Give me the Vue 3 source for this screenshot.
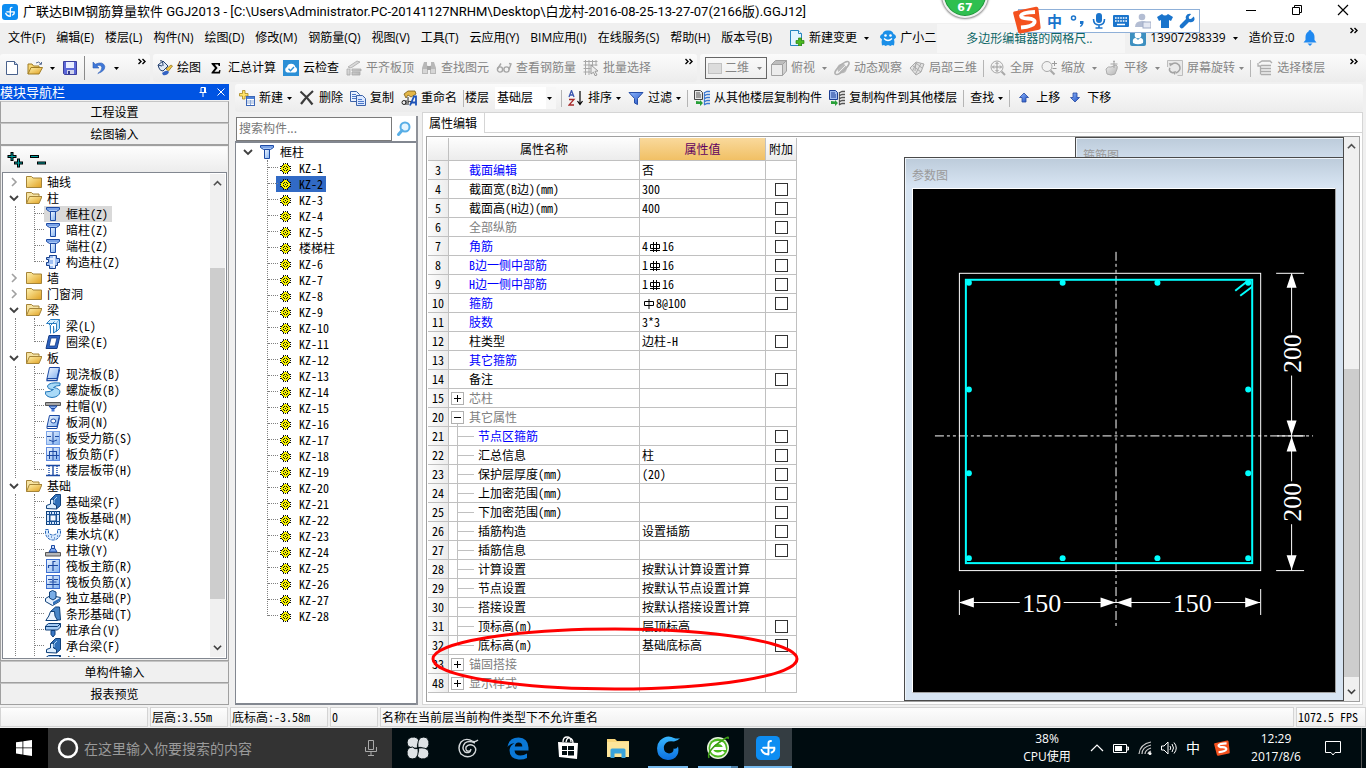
<script setup>
import { ref } from 'vue'

const title = '广联达BIM钢筋算量软件 GGJ2013 - [C:\\Users\\Administrator.PC-20141127NRHM\\Desktop\\白龙村-2016-08-25-13-27-07(2166版).GGJ12]'

const menus = ['文件(F)', '编辑(E)', '楼层(L)', '构件(N)', '绘图(D)', '修改(M)', '钢筋量(Q)', '视图(V)', '工具(T)', '云应用(Y)', 'BIM应用(I)', '在线服务(S)', '帮助(H)', '版本号(B)']

const drawTools = [
  { icon: 'paint', label: '绘图' },
  { icon: 'sigma', label: '汇总计算' },
  { icon: 'cloud', label: '云检查' },
  { icon: 'align', label: '平齐板顶', off: true },
  { icon: 'binoc', label: '查找图元', off: true },
  { icon: 'glasses', label: '查看钢筋量', off: true },
  { icon: 'batch', label: '批量选择', off: true },
]
const viewTools = [
  { icon: 'cube', label: '俯视', arrow: true },
  { icon: 'orbit', label: '动态观察' },
  { icon: 'local3d', label: '局部三维' },
  { sep: true },
  { icon: 'full', label: '全屏' },
  { icon: 'zoom', label: '缩放', arrow: true },
  { icon: 'pan', label: '平移', arrow: true },
  { icon: 'rotate', label: '屏幕旋转', arrow: true },
  { sep: true },
  { icon: 'floors', label: '选择楼层' },
]

const moduleTree = [
  { label: '轴线' },
  { label: '柱', kids: [['pillar', '框柱(Z)'], ['pillar', '暗柱(Z)'], ['pillar', '端柱(Z)'], ['struct', '构造柱(Z)']] },
  { label: '墙' },
  { label: '门窗洞' },
  { label: '梁', kids: [['beam', '梁(L)'], ['ring', '圈梁(E)']] },
  { label: '板', kids: [['slab', '现浇板(B)'], ['spiral', '螺旋板(B)'], ['cap', '柱帽(V)'], ['hole', '板洞(N)'], ['bars', '板受力筋(S)'], ['barf', '板负筋(F)'], ['strip', '楼层板带(H)']] },
  { label: '基础', kids: [['fbeam', '基础梁(F)'], ['raft', '筏板基础(M)'], ['sump', '集水坑(K)'], ['pier', '柱墩(Y)'], ['main', '筏板主筋(R)'], ['neg', '筏板负筋(X)'], ['indep', '独立基础(P)'], ['stripf', '条形基础(T)'], ['pile', '桩承台(V)'], ['fbeam', '承台梁(F)'], ['pile', '桩(U)']] },
]
const activeModule = ref('框柱(Z)')

const components = []
for (let i = 1; i <= 28; i++) {
  components.push('KZ-' + i)
  if (i === 5) components.push('楼梯柱')
}
const activeComponent = ref('KZ-2')
const keyword = ref('')

const rows = ref([
  { n: 3, name: '截面编辑', tone: 'blue', value: '否' },
  { n: 4, name: '截面宽(B边)(mm)', value: '300', box: true },
  { n: 5, name: '截面高(H边)(mm)', value: '400', box: true },
  { n: 6, name: '全部纵筋', tone: 'gray', box: true },
  { n: 7, name: '角筋', tone: 'blue', bar: ['4', 'rebar3', '16'], box: true },
  { n: 8, name: 'B边一侧中部筋', tone: 'blue', bar: ['1', 'rebar3', '16'], box: true },
  { n: 9, name: 'H边一侧中部筋', tone: 'blue', bar: ['1', 'rebar3', '16'], box: true },
  { n: 10, name: '箍筋', tone: 'blue', bar: ['', 'rebar1', '8@100'], box: true },
  { n: 11, name: '肢数', tone: 'blue', value: '3*3' },
  { n: 12, name: '柱类型', value: '边柱-H', box: true },
  { n: 13, name: '其它箍筋', tone: 'blue' },
  { n: 14, name: '备注', box: true },
  { n: 15, name: '芯柱', tone: 'gray', group: '+' },
  { n: 20, name: '其它属性', tone: 'gray', group: '-' },
  { n: 21, name: '节点区箍筋', tone: 'blue', child: true, box: true },
  { n: 22, name: '汇总信息', child: true, value: '柱', box: true },
  { n: 23, name: '保护层厚度(mm)', child: true, value: '(20)', box: true },
  { n: 24, name: '上加密范围(mm)', child: true, box: true },
  { n: 25, name: '下加密范围(mm)', child: true, box: true },
  { n: 26, name: '插筋构造', child: true, value: '设置插筋', box: true },
  { n: 27, name: '插筋信息', child: true, box: true },
  { n: 28, name: '计算设置', child: true, value: '按默认计算设置计算' },
  { n: 29, name: '节点设置', child: true, value: '按默认节点设置计算' },
  { n: 30, name: '搭接设置', child: true, value: '按默认搭接设置计算' },
  { n: 31, name: '顶标高(m)', child: true, value: '层顶标高', box: true },
  { n: 32, name: '底标高(m)', child: true, last: true, value: '基础底标高', box: true },
  { n: 33, name: '锚固搭接', tone: 'gray', group: '+' },
  { n: 48, name: '显示样式', tone: 'gray', group: '+' },
])

const rebars = [[56, 94], [150, 94], [245, 94], [336, 94], [56, 201], [56, 285], [56, 370], [336, 201], [336, 285], [336, 370], [150, 370], [245, 370]]

const pinned = [
  { icon: 'fan', label: '风扇' },
  { icon: 'swirlw', label: '漩涡' },
  { icon: 'edge', label: 'Edge' },
  { icon: 'store', label: '商店' },
  { icon: 'explorer', label: '文件资源管理器' },
  { icon: 'swirlb', label: '浏览器', run: true },
  { icon: 'green', label: '安全浏览器', run: true, many: true },
  { icon: 'glodon', label: '广联达', run: true, on: true },
]
</script>

<template>
  <div class="desktop">
    <svg class="defs" width="0" height="0" aria-hidden="true">
      <defs>
        <linearGradient id="gYellow" x1="0" y1="0" x2="1" y2="1"><stop offset="0" stop-color="#fff3b0" /><stop offset="1" stop-color="#e0a020" /></linearGradient>
        <linearGradient id="gBlue" x1="0" y1="0" x2="1" y2="1"><stop offset="0" stop-color="#f4f9ff" /><stop offset="1" stop-color="#7fb0f0" /></linearGradient>
        <linearGradient id="gDeep" x1="0" y1="0" x2="1" y2="1"><stop offset="0" stop-color="#8fb8ff" /><stop offset="1" stop-color="#1f4fc0" /></linearGradient>
        <linearGradient id="gGray" x1="0" y1="0" x2="1" y2="1"><stop offset="0" stop-color="#efefef" /><stop offset="1" stop-color="#b4b4b4" /></linearGradient>
        <linearGradient id="gSwirl" x1="0" y1="0" x2="0" y2="1"><stop offset="0" stop-color="#38b8ff" /><stop offset="1" stop-color="#0b6fe0" /></linearGradient>
      </defs>
      <symbol id="glodon" viewBox="0 0 16 16"><rect width="16" height="16" rx="3" fill="#0d8df2" /><path d="M8.300 12.300V4.800q0-1.500 1.700-1.500M8.300 12.300q-3.600-.2-4.600-3M4.800 7.800h7.400q.4 2.400-1.800 3.200" fill="none" stroke="#fff" stroke-width="1.300" stroke-linecap="round" /></symbol>
      <symbol id="doc" viewBox="0 0 16 16"><path d="M2.500 1.500h8l3 3v10h-11z" fill="#fff" stroke="#49618c" /><path d="M10.500 1.500v3h3" fill="#c8d8f0" stroke="#49618c" /></symbol>
      <symbol id="open" viewBox="0 0 16 16"><path d="M1 14V4h4l1.500 2H12v3" fill="#f7d774" stroke="#a07c24" /><path d="M1 14l3-6.500h11.500L12 14z" fill="url(#gYellow)" stroke="#a07c24" /><path d="M9 3q3-2.500 5 1m.5-2v2.300h-2.300" fill="none" stroke="#5a6f95" /></symbol>
      <symbol id="save" viewBox="0 0 16 16"><path d="M1.500 1.500h13v13h-12l-1-1z" fill="#5b67d8" stroke="#3c3f9c" /><path d="M4 2h8v6H4z" fill="#e9edff" /><path d="M5 10h7v4H5z" fill="#d0d4ec" /><path d="M6 11h2v3H6z" fill="#333a8a" /></symbol>
      <symbol id="undo" viewBox="0 0 16 16"><path d="M2 2v6h6L5.800 5.900q4-1.600 5 1.300.7 3-4 6.300 7.300-2.500 7-7Q12.300.8 4.300 4.200z" fill="#3f78d8" stroke="#2a5bb5" stroke-width=".6" /></symbol>
      <symbol id="paint" viewBox="0 0 16 16"><path d="M1 5l5-4 5 5-5 5q-3 0-4-3z" fill="#dfe9f7" stroke="#24406e" /><path d="M1 5l4 1M3 1q3-2 3 5" stroke="#24406e" fill="none" /><path d="M9 9l5-4 1.500 1-4 5z" fill="#f2c640" stroke="#8a6a16" stroke-width=".7" /><path d="M5 13q5-4 7-1-2 4-6 3z" fill="#3564c4" /></symbol>
      <symbol id="sigma" viewBox="0 0 16 16"><path d="M3.500 3h8.500v3h-1.200L10 4.500H6.800L9.600 8l-3.200 3.700H10.600l.8-1.700h1.100L12 13.500H3.500v-1L7 8 3.500 4z" fill="#000" /></symbol>
      <symbol id="cloud" viewBox="0 0 16 16"><rect width="16" height="16" fill="#2b8fd6" /><path d="M4 12.500a3 3 0 0 1 0-5.500 4.300 4.300 0 0 1 8.300 0 3 3 0 0 1 0 5.500z" fill="#fff" /><path d="M5.500 8.800l2 2 3.500-3.800" fill="none" stroke="#2b8fd6" stroke-width="1.400" /></symbol>
      <symbol id="align" viewBox="0 0 16 16"><path d="M2 7l9-6 3 1-9 6zM1 9h3v6H1zM6 9h9v2H6zM6 12h8v3H6z" fill="url(#gGray)" stroke="#a8a8a8" stroke-width=".8" /></symbol>
      <symbol id="binoc" viewBox="0 0 16 16"><path d="M3 2h3v3l1 2v7H1V8zM10 2h3l2 6v6H9V7l1-2z" fill="#b8b8b8" /><path d="M6 6h4v4H6z" fill="#a4a4a4" /><path d="M2 9h4v4H2zM10 9h4v4h-4z" fill="#d6d6d6" /></symbol>
      <symbol id="glasses" viewBox="0 0 16 16"><g fill="none" stroke="#a6a6a6" stroke-width="1.400"><circle cx="4" cy="9.500" r="2.600" /><circle cx="10.500" cy="9.500" r="2.600" /><path d="M1.500 9L5 3.500M13 9.500L15 4l-2-.5" /></g></symbol>
      <symbol id="batch" viewBox="0 0 16 16"><path d="M.5 1.500h14M.5 5h14M.5 8.500h7M.5 12h7M2.500 0v15M6 0v15M9.500 0v6M13 0v6" stroke="#a8a8a8" fill="none" /><path d="M8 5l7 6-3 .3 2 3.700-2 .7-1.500-3.500L8 14z" fill="#eee" stroke="#9a9a9a" /></symbol>
      <symbol id="flat" viewBox="0 0 16 16"><rect x="1.500" y="3.500" width="13" height="10" fill="#dcdcdc" stroke="#c2c2c2" /></symbol>
      <symbol id="cube" viewBox="0 0 16 16"><path d="M.5 4.500l4-4h11l-4 4z" fill="#bdbdbd" stroke="#a2a2a2" /><path d="M.5 4.500h11v11H.5z" fill="#ececec" stroke="#a2a2a2" /><path d="M11.500 4.500l4-4v10.500l-4 4.500z" fill="#d2d2d2" stroke="#a2a2a2" /></symbol>
      <symbol id="orbit" viewBox="0 0 16 16"><circle cx="8" cy="8.500" r="4.800" fill="#bcbcbc" /><ellipse cx="8" cy="8" rx="9" ry="3" transform="rotate(-42 8 8)" fill="none" stroke="#b0b0b0" stroke-width="1.500" /><path d="M5 12l7-7" stroke="#eee" /></symbol>
      <symbol id="local3d" viewBox="0 0 16 16"><path d="M1 8l6-6 8 2-3 8-5 3z" fill="#e2e2e2" stroke="#a9a9a9" /><path d="M3.500 11l4-8M6.500 14L12 3.500M4 6l8 6M7 3l6 5M7 2l-1 9" stroke="#ababab" fill="none" /></symbol>
      <symbol id="full" viewBox="0 0 16 16"><circle cx="7" cy="7" r="6" fill="#f2f2f2" stroke="#a8a8a8" /><path d="M11.500 11.500l3.500 3.500" stroke="#a8a8a8" stroke-width="2" /><path d="M7 2.500v9M2.500 7h9M5.500 4L7 2.500 8.500 4M5.500 10L7 11.500 8.500 10M4 5.500L2.500 7 4 8.500M10 5.500L11.500 7 10 8.500" fill="none" stroke="#9b9b9b" /></symbol>
      <symbol id="zoom" viewBox="0 0 16 16"><circle cx="6" cy="6.500" r="5" fill="#f2f2f2" stroke="#a8a8a8" /><path d="M9.500 10.500l4 4" stroke="#a8a8a8" stroke-width="2.200" /><path d="M11 3.500h5M13.500 1v5M11.500 8.500h4" stroke="#9b9b9b" fill="none" /></symbol>
      <symbol id="pan" viewBox="0 0 16 16"><path d="M2 9q2-3 5-2l5-2q2 1 1 4l-2 5q-4 2-8 0z" fill="url(#gGray)" stroke="#adadad" /><path d="M10 1v7M6.500 4h7" stroke="#a5a5a5" fill="none" /><path d="M9 2l1-2 1 2z" fill="#a5a5a5" /></symbol>
      <symbol id="rotate" viewBox="0 0 16 16"><path d="M.5 7V.5h15v15h-5" fill="#e9e9e9" stroke="#bdbdbd" /><path d="M4 5q4-4 8 0 3 5-3 8M3 8q-2 3 3 5" fill="none" stroke="#a3a3a3" stroke-width="1.500" /><path d="M2 3l4 .5-3 3zM8 15l-3-3 4-1z" fill="#a3a3a3" /></symbol>
      <symbol id="floors" viewBox="0 0 16 16"><path d="M2 3l3-2h8l2 2M4 5.500h10M4 8.500h10M4 11.500h10M4 14.500h10M1 3v3h3M3.500 14.500v-9" fill="none" stroke="#adadad" stroke-width="1.300" /></symbol>
      <symbol id="newchg" viewBox="0 0 16 16"><path d="M1.500.5h8l3 3v12h-11z" fill="#e4f4ff" stroke="#2685c0" /><path d="M9.500.5v3h3" fill="#fff" stroke="#2685c0" /><path d="M9.500 8h3v2.500H15v3h-2.500V16h-3v-2.500H7v-3h2.500z" fill="#4ab81e" stroke="#2c8010" stroke-width=".7" /></symbol>
      <symbol id="face" viewBox="0 0 16 16"><path d="M8 .5q4.500-.5 5.500 3.500 2.500.5 2.500 3.500l-2 2q1 2.500 0 6l-2-.5-1.500 1L8 15l-2.500 1L4 15l-2 .5q-1-3.500 0-6l-2-2Q0 4.500 2.500 4 3.500 0 8 .5z" fill="#1b8fe8" /><circle cx="5.500" cy="5.500" r="1.300" fill="#fff" /><circle cx="10.500" cy="5.500" r="1.300" fill="#fff" /><path d="M4 8.500q4 4 8 0" fill="none" stroke="#fff" stroke-width="1.300" /></symbol>
      <symbol id="user" viewBox="0 0 16 16"><rect width="16" height="16" rx="2" fill="#3d8fc0" /><path d="M3 13q-1-5 3-5l2 2 2-2q4 0 3 5-5 2.500-10 0z" fill="#fff" /><circle cx="8" cy="5" r="3.300" fill="#fff" /></symbol>
      <symbol id="bell" viewBox="0 0 16 16"><path d="M8 0q1.500 0 1.500 1.500Q12.500 3 12.500 7v3l2 2.500h-13l2-2.500V7q0-4 3-5.500Q6.500 0 8 0z" fill="#2089f0" /><path d="M5.500 13.500h5L8 16z" fill="#2089f0" /></symbol>
      <symbol id="create" viewBox="0 0 16 16"><path d="M3.500.5H6v3h3V6H6v3H3.500V6h-3V3.500h3z" fill="#ffe36a" stroke="#a8861c" stroke-width=".8" /><rect x="7.500" y="6.500" width="8" height="9" fill="#fff" stroke="#3c67b8" /><path d="M8 7h7v2H8z" fill="#4f83d8" /><path d="M8 11h7M8 13h7M11.500 10v5" stroke="#8fabd8" /></symbol>
      <symbol id="del" viewBox="0 0 16 16"><path d="M1.500 1.500q6 5 12 13M14 1Q7 7 2 14" fill="none" stroke="#3b3b3b" stroke-width="2.200" /></symbol>
      <symbol id="copy" viewBox="0 0 16 16"><path d="M.5 1.500h6l3 3v7h-9z" fill="#eaf2ff" stroke="#3c62a8" /><path d="M6.500 5.500h6l3 3v7h-9z" fill="#dbe8ff" stroke="#3c62a8" /><path d="M2 4.500h4M2 6.500h4M2 8.500h4M8 9.500h4M8 11.500h6M8 13.500h6" stroke="#4c78c8" /></symbol>
      <symbol id="rename" viewBox="0 0 16 16"><path d="M3 4l4-3h7l1 3-5 3-3-2-2 3z" fill="#e3b648" stroke="#7b5c14" stroke-width=".8" /><circle cx="3" cy="12.500" r="2" fill="none" stroke="#222" /><path d="M5 10v5M7 7v8m0-3q4-2 3 2" fill="none" stroke="#222" /><path d="M9 15.500l4-9h2v9M10.500 12.500H15" fill="none" stroke="#1d53b8" stroke-width="1.800" /></symbol>
      <symbol id="sort" viewBox="0 0 16 16"><path d="M1 7l2.500-6.500L6 7M2 5h3" fill="none" stroke="#3a56b0" stroke-width="1.300" /><path d="M1 9.500h5l-5 5.500h5" fill="none" stroke="#a82a2a" stroke-width="1.300" /><path d="M12 1v13M9.500 11l2.500 3.500 2.500-3.500" fill="none" stroke="#000" stroke-width="1.200" /></symbol>
      <symbol id="funnel" viewBox="0 0 16 16"><path d="M1 2.500h14L9.500 8.500v6l-3-1.500V8.500z" fill="url(#gDeep)" stroke="#274fa8" /></symbol>
      <symbol id="fromfl" viewBox="0 0 16 16"><path d="M.5.500h6l2 2v7h-8z" fill="#e6e6e6" stroke="#444" /><path d="M2 3h4M2 5h5M2 7h5" stroke="#555" /><path d="M10 3l3-1.500h3M10 6l3-1.500h3M10 9l3-1.500h3M10 12l3-1.500h3M10 15l3-1.500h3M10.500 2v13" stroke="#3b78d0" stroke-width="1.300" fill="none" /><path d="M2 11v3h4v2l3-3-3-3v1.500z" fill="#28a038" /></symbol>
      <symbol id="tofl" viewBox="0 0 16 16"><path d="M.5.500h6l2 2v7h-8z" fill="#9fbcf2" stroke="#1d3f94" /><path d="M2 3h4M2 5h5M2 7h5" stroke="#1d3f94" /><path d="M10 3l3-1.500h3M10 6l3-1.500h3M10 9l3-1.500h3M10 12l3-1.500h3M10 15l3-1.500h3M10.500 2v13" stroke="#555" stroke-width="1.300" fill="none" /><path d="M2 11v3h4v2l3-3-3-3v1.500z" fill="#28a038" /></symbol>
      <symbol id="up" viewBox="0 0 16 16"><path d="M8 3l4.500 4.500H10V12H6V7.500H3.500z" fill="url(#gDeep)" stroke="#2448a0" stroke-width=".8" /></symbol>
      <symbol id="down" viewBox="0 0 16 16"><path d="M8 12l4.500-4.500H10V3H6v4.500H3.500z" fill="url(#gDeep)" stroke="#2448a0" stroke-width=".8" /></symbol>
      <symbol id="folder" viewBox="0 0 16 16"><path d="M.5 13.500v-11h5l1.500 1.500h8.500v9.500z" fill="url(#gYellow)" stroke="#a58438" /></symbol>
      <symbol id="folderopen" viewBox="0 0 16 16"><path d="M.5 13.500v-11h5l1.500 1.500h6v2" fill="#f6e3a2" stroke="#a58438" /><path d="M.5 13.500L3.500 6.500h12.500l-3 7z" fill="url(#gYellow)" stroke="#a58438" /></symbol>
      <symbol id="pillar" viewBox="0 0 16 16"><path d="M1.500 1.500h13v2l-3 2h-7l-3-2z" fill="#a9c8f6" stroke="#1c4aa4" /><path d="M2 3h12" stroke="#4d7fd8" /><path d="M5.500 5.500h5v9h-5z" fill="url(#gBlue)" stroke="#1c4aa4" /></symbol>
      <symbol id="struct" viewBox="0 0 16 16"><path d="M4.500 1.500h7v3h3v4h-2v3h-2v3h-6v-3h-3v-3h2v-3h-2v-2h3z" fill="#9fc0f4" stroke="#173f8c" /><path d="M9 2v12M5 5h3M5 11h3" stroke="#fff" stroke-width="1.500" /></symbol>
      <symbol id="beam" viewBox="0 0 16 16"><path d="M1.500 5.500l4-4h9l-3 4z" fill="#d5efff" stroke="#2a7dc0" /><path d="M3.500 5.500l2 2v8M11.500 5.500v8l3-3v-9M5.500 7.500l4-4M8.500 8v7l3-2" fill="#bfe4fb" stroke="#2a7dc0" /></symbol>
      <symbol id="ring" viewBox="0 0 16 16"><path d="M4 1.500h11L12 14.500H1z" fill="#2c62c0" stroke="#143c88" /><path d="M6 4h6l-2 8H4.200z" fill="#fff" stroke="#143c88" stroke-width=".8" /></symbol>
      <symbol id="slab" viewBox="0 0 16 16"><path d="M4.500 1.500h10l-2.500 11h-10z" fill="url(#gBlue)" stroke="#1c4aa4" /><path d="M2 12.500v2h10l2.500-11" fill="none" stroke="#1c4aa4" stroke-width="1.300" /></symbol>
      <symbol id="spiral" viewBox="0 0 16 16"><path d="M15 1Q4 0 2.500 4q0 3.500 6 3.500Q6 10 0 10q.5 5 7 5.500 7-.5 8-5.500 0-3.500-6.500-4.500 2-2 6.500-2z" fill="#a9daf8" stroke="#1f74b8" /></symbol>
      <symbol id="cap" viewBox="0 0 16 16"><path d="M.5 4.500h15v3H.5z" fill="#a5a5a5" stroke="#555" /><path d="M4 8l2 2.500h4L12 8z" fill="#8fb4f0" stroke="#1c4aa4" /><path d="M6.500 11h3v2.500h-3z" fill="#4477d8" /></symbol>
      <symbol id="hole" viewBox="0 0 16 16"><path d="M4.500 1.500h10L12 12.500H2z" fill="url(#gBlue)" stroke="#1c4aa4" /><path d="M2 12.500v2h10l2.500-11" fill="none" stroke="#1c4aa4" /><ellipse cx="8.300" cy="7" rx="2.500" ry="2" fill="#fff" stroke="#1c4aa4" /></symbol>
      <symbol id="bars" viewBox="0 0 16 16"><rect x="1.500" y="1.500" width="13" height="13" fill="url(#gBlue)" stroke="#7da5e8" /><path d="M2 6.500h4M10 6.500h4M8 2v12M4 10q4 3 8 0" fill="none" stroke="#1c4aa4" /></symbol>
      <symbol id="barf" viewBox="0 0 16 16"><rect x="1.500" y="1.500" width="13" height="13" fill="url(#gBlue)" stroke="#5f8ade" /><path d="M4 5.500h8M2 9.500h12M8 2v12M4.500 5v8M11.500 5v8" fill="none" stroke="#1c4aa4" /></symbol>
      <symbol id="strip" viewBox="0 0 16 16"><path d="M1 3.500h14M1 13.500h14M8 4v9" stroke="#1c4aa4" stroke-width="1.400" /><path d="M4 4v9M12 4v9" stroke="#1c4aa4" stroke-width="1.400" stroke-dasharray="1 1" /></symbol>
      <symbol id="fbeam" viewBox="0 0 16 16"><path d="M5.500 5.500l5-5h5v11l-4 3.500" fill="#2f6fb8" stroke="#0e3f78" /><path d="M1.500 14.500v-3l4-1.500V5.500l3-.5v5l3 1.500v3.500z" fill="#dceeff" stroke="#0e3f78" /><path d="M12 3l-3 3v3" stroke="#a9d2f5" fill="none" /></symbol>
      <symbol id="raft" viewBox="0 0 16 16"><rect x="1.500" y="1.500" width="13" height="13" fill="#d5e8ff" stroke="#0e3f78" /><path d="M4.500 1v14M6.500 1v14M9.500 1v14M11.500 1v14M1 4.500h14M1 11.500h14" stroke="#1a5296" /><path d="M5 5h6v6H5z" fill="#f2f8ff" stroke="#1a5296" /></symbol>
      <symbol id="sump" viewBox="0 0 16 16"><path d="M.5 3.500h3V7q4 4 9 0V3.500h3V8q-2 6-7.500 6T.5 8z" fill="#d6eaff" stroke="#2a67b8" stroke-dasharray="3 1" /><path d="M3 10h1M6 11h1M9 12h1M12 10h1" stroke="#1c4aa4" /></symbol>
      <symbol id="pier" viewBox="0 0 16 16"><path d="M.5 10.500h15v3.500H.5z" fill="#b8b8b8" stroke="#555" /><path d="M4 10l2-3.500h4L12 10z" fill="#7ba6ee" stroke="#1c4aa4" /><path d="M6.500 3.500h3v3h-3z" fill="#cfe0fb" stroke="#1c4aa4" /></symbol>
      <symbol id="main" viewBox="0 0 16 16"><rect x="1.500" y="1.500" width="13" height="13" fill="url(#gBlue)" stroke="#3d6fd0" /><path d="M3.500 10V7.500H13M8 13V3.500h2.500" fill="none" stroke="#1c4aa4" stroke-width="1.200" /></symbol>
      <symbol id="neg" viewBox="0 0 16 16"><rect x="1.500" y="1.500" width="13" height="13" fill="url(#gBlue)" stroke="#3d6fd0" /><path d="M3 5.500h4l1 1 1-1h4M2 10.500h12M8 2v12M4.500 8h7" fill="none" stroke="#1c4aa4" /></symbol>
      <symbol id="indep" viewBox="0 0 16 16"><path d="M.5 8.500l5-3 10 2-1 4-7 4-7-4z" fill="#e5f1ff" stroke="#0e3f78" /><path d="M4.500 8V2l3-1.500L11 2v6l-3 2z" fill="#79ade6" stroke="#0e3f78" /><path d="M8 15l7-4.500V8l-7 4z" fill="#2f6fb8" /></symbol>
      <symbol id="stripf" viewBox="0 0 16 16"><path d="M5.500 5.500l5-4.500h4l1 13h-4" fill="#4886c8" stroke="#0e3f78" /><path d="M.8 14.500l3-4.500 1.700-4.500h4L10 10l2.500 4.500z" fill="#eaf4ff" stroke="#0e3f78" /></symbol>
      <symbol id="pile" viewBox="0 0 16 16"><path d="M.5 4l3-2.500h12V5l-3 3h-12z" fill="#a6ccf5" stroke="#0e3f78" /><path d="M.5 4.500h12l3-3" fill="none" stroke="#0e3f78" /><path d="M6 8.500h4v4L8 15l-2-2.500z" fill="#3b78c4" stroke="#0e3f78" /></symbol>
      <symbol id="gear" viewBox="0 0 11 11"><g shape-rendering="crispEdges"><path d="M3 1h5v1h1v1h1v5h-1v1h-1v1H3V9H2V8H1V3h1V2h1z" fill="#f5f000" /><path d="M3 0h1v2h-1zM5 0h1v1h-1zM7 0h1v2h-1zM3 9h1v2h-1zM5 10h1v1h-1zM7 9h1v2h-1zM0 3h2v1H0zM0 5h1v1H0zM0 7h2v1H0zM9 3h2v1H9zM10 5h1v1h-1zM9 7h2v1H9zM2 2h1v1H2zM8 2h1v1H8zM2 8h1v1H2zM8 8h1v1H8zM4 3h1v1H4zM6 3h1v1H6zM3 4h1v1H3zM7 4h1v1H7zM3 6h1v1H3zM7 6h1v1H7zM4 7h1v1H4zM6 7h1v1H6zM5 5h1v1H5z" fill="#111" /></g></symbol>
      <symbol id="search" viewBox="0 0 16 16"><circle cx="9" cy="6" r="4.500" fill="#e6f5ff" stroke="#58aee6" stroke-width="2" /><path d="M6 9.500L2.500 13.500" stroke="#58aee6" stroke-width="3" stroke-linecap="round" /></symbol>
      <symbol id="chevr" viewBox="0 0 10 10"><path d="M3 1l4 4-4 4" fill="none" stroke="#a0a0a0" stroke-width="1.600" /></symbol>
      <symbol id="chevd" viewBox="0 0 10 10"><path d="M1 3l4 4 4-4" fill="none" stroke="#404040" stroke-width="1.800" /></symbol>
      <symbol id="chevu" viewBox="0 0 10 10"><path d="M1 7l4-4 4 4" fill="none" stroke="#505050" stroke-width="1.800" /></symbol>
      <symbol id="more" viewBox="0 0 8 8"><path d="M.5 1l2.500 2.500L.5 6M4.500 1L7 3.500 4.500 6" fill="none" stroke="#000" stroke-width="1.400" /></symbol>
      <symbol id="arr" viewBox="0 0 5 3"><path d="M0 0h5L2.500 3z" fill="currentColor" /></symbol>
      <symbol id="rebar3" viewBox="0 0 12 12"><path d="M1.500 3.500h9v4h-9zM4.500 1v10M7.500 1v10M1 9.500h10" fill="none" stroke="#000" /></symbol>
      <symbol id="rebar1" viewBox="0 0 12 12"><path d="M1.500 3.500h9v4h-9zM6 1v10" fill="none" stroke="#000" /></symbol>
      <symbol id="sogou" viewBox="0 0 28 28"><path d="M1 5.500L23 .8q2-.3 2.400 1.500l2.200 19q.2 2-1.700 2.500L7.500 27.500q-2 .3-2.500-1.700L.2 7.500Q0 5.900 1 5.500z" fill="#f4511e" /><path d="M22 6Q9 6.500 8 9.500q0 3 7 3 7.500.5 6.500 4Q20 20.500 8 21.500" fill="none" stroke="#fff" stroke-width="3.800" /></symbol>
      <symbol id="fan" viewBox="0 0 24 24"><g fill="#dfe3e6" stroke="#000c10" stroke-width="1"><path id="blade" d="M11.500 12Q4 13 1.500 9-.3 2.800 5.500 1.200 12.500 0 13 6.500q-2.500 2-1.500 5.500z" /><use href="#blade" transform="rotate(90 12 12)" /><use href="#blade" transform="rotate(180 12 12)" /><use href="#blade" transform="rotate(270 12 12)" /></g></symbol>
      <symbol id="swirlw" viewBox="0 0 24 24"><g fill="none" stroke="#d5dadc" stroke-width="1.400"><path d="M22 4q-2 2-5 1.500Q10 1 5 6q-4 6 0 12 6 5 12 1 5-5 1-9-5-3-8 1-1 5 4 4" /><path d="M19 7q-6-3-10 0-4 5 0 9 5 2 6-3" /></g></symbol>
      <symbol id="edge" viewBox="0 0 24 24"><path d="M1.500 11Q3 1.500 12.500 1.500 22 2 22.500 11.500v3H8.500q.5 5 6 5 3.500 0 6.500-2v4.500q-4 2-8.500 1.500Q3.500 22.500 3.500 14q.5-4.500 5-7-4 .2-7 4zM8.800 10.500h7.500q0-4-3.800-4-3.200.2-3.700 4z" fill="#0a78d6" fill-rule="evenodd" /></symbol>
      <symbol id="store" viewBox="0 0 24 24"><path d="M2 6l20 1-1 16-18-2z" fill="#fff" /><path d="M7 6q0-5 4-5t4 5M10 6q1-5 4-4t3 5" fill="none" stroke="#fff" stroke-width="1.300" /><path d="M6 10h5v4H6zM12 10h6v4h-6zM6 15h5v4H6zM12 15h6v4.500h-6z" fill="#000c10" /></symbol>
      <symbol id="explorer" viewBox="0 0 24 24"><path d="M1 3h8l2 2h12v16H1z" fill="#f9d77c" /><path d="M1 6h22v15H1z" fill="#fde59a" /><path d="M4.500 22v-8q0-1.500 1.500-1.500h12q1.500 0 1.500 1.500v8h-4v-4.500h-7V22z" fill="#39a3dc" /></symbol>
      <symbol id="swirlb" viewBox="0 0 24 24"><path d="M24 2q-2 3-6 3.500Q10 4 8 10q-1 7 5 7.500 5-.5 4.500-5 3 1 4.500-2 2 9-5 12.500-9 3-14.500-4Q-1 10 4 4.500 11-2 18 2q3 1 6 0z" fill="url(#gSwirl)" /></symbol>
      <symbol id="green" viewBox="0 0 24 24"><circle cx="12" cy="12" r="11" fill="#e6f2dd" /><circle cx="12" cy="12" r="9.500" fill="#4cb81f" /><path d="M5.500 12.500h13q-.5-6-6.500-6t-6.500 6q1 5.500 6.500 5.500 4 0 5.500-2.500" fill="none" stroke="#fff" stroke-width="2.800" /><path d="M3 22Q0 14 20 2q3-2 2 1" stroke="#3b9c14" fill="none" stroke-width="1.500" /></symbol>
      <symbol id="winlogo" viewBox="0 0 16 16"><path d="M0 2.300l6.500-.9v6.100H0zM7.300 1.300L16 0v7.500H7.300zM0 8.300h6.500v6.200L0 13.600zM7.300 8.300H16V16l-8.700-1.300z" fill="#fff" /></symbol>
    </svg>

    <header class="titlebar">
      <svg class="i16"><use href="#glodon" /></svg>
      <h1>{{ title }}</h1>
      <div class="winbtns">
        <button aria-label="最小化"><svg viewBox="0 0 12 12"><path d="M1 6.500h10" stroke="#000" /></svg></button>
        <button aria-label="还原"><svg viewBox="0 0 12 12"><path d="M1.500 3.500h7v7h-7zM3.500 3.500v-2h7v7h-2" fill="none" stroke="#000" /></svg></button>
        <button aria-label="关闭"><svg viewBox="0 0 12 12"><path d="M1 1l10 10M11 1L1 11" stroke="#000" stroke-width="1.200" /></svg></button>
      </div>
    </header>

    <nav class="menubar">
      <button v-for="m in menus" :key="m">{{ m }}</button>
      <button class="ico change"><svg class="i16"><use href="#newchg" /></svg>新建变更<svg class="arr wide"><use href="#arr" /></svg></button>
      <button class="ico"><svg class="i16"><use href="#face" /></svg>广小二</button>
      <a class="ad" href="#">多边形编辑器的网格尺..</a>
      <button class="ico acct"><svg class="i16"><use href="#user" /></svg>13907298339<svg class="arr wide"><use href="#arr" /></svg></button>
      <button class="ico">造价豆:0<svg class="i16 bell"><use href="#bell" /></svg></button>
      <button class="more" aria-label="更多"><svg><use href="#more" /></svg></button>
    </nav>

    <div class="toolrow">
      <div class="toolbar files">
        <button class="tb" aria-label="新建"><svg class="i16"><use href="#doc" /></svg></button>
        <button class="tb" aria-label="打开"><svg class="i16"><use href="#open" /></svg><svg class="arr wide"><use href="#arr" /></svg></button>
        <button class="tb" aria-label="保存"><svg class="i16"><use href="#save" /></svg></button>
        <span class="sep dark"></span>
        <button class="tb" aria-label="撤销"><svg class="i16"><use href="#undo" /></svg><svg class="arr wide"><use href="#arr" /></svg></button>
        <button class="more" aria-label="更多"><svg><use href="#more" /></svg></button>
      </div>
      <div class="toolbar draw">
        <button v-for="t in drawTools" :key="t.label" class="tb" :class="{ off: t.off }"><svg class="i16"><use :href="'#' + t.icon" /></svg>{{ t.label }}</button>
        <button class="more" aria-label="更多"><svg><use href="#more" /></svg></button>
      </div>
      <div class="toolbar view">
        <button class="tb off dim2"><svg class="i16"><use href="#flat" /></svg>二维<svg class="arr"><use href="#arr" /></svg></button>
        <template v-for="(t, k) in viewTools" :key="k">
          <span v-if="t.sep" class="sep"></span>
          <button v-else class="tb off"><svg class="i16"><use :href="'#' + t.icon" /></svg>{{ t.label }}<svg v-if="t.arrow" class="arr" :class="{ wide: t.label.length < 4 }"><use href="#arr" /></svg></button>
        </template>
        <button class="more" aria-label="更多"><svg><use href="#more" /></svg></button>
      </div>
    </div>

    <main class="work">
      <aside class="modules">
        <div class="caption">
          <h2>模块导航栏</h2>
          <button aria-label="固定"><svg viewBox="0 0 10 10"><path d="M3 .5h4.500v5H3zM6.500.500v5M1.500 5.500h7M5 5.500V10" fill="none" stroke="#fff" /></svg></button>
          <button aria-label="关闭"><svg viewBox="0 0 10 10"><path d="M1.500 1.500l7 7M8.500 1.500l-7 7" stroke="#fff" /></svg></button>
        </div>
        <button class="bar">工程设置</button>
        <button class="bar">绘图输入</button>
        <div class="treebox">
          <div class="treetools">
            <button aria-label="全部展开"><svg viewBox="0 0 16 16"><path d="M5 0v9M.5 4.500h9M11.500 6.500v9M7 11h9" stroke="#000" stroke-width="3" /><path d="M5 1v7M1.500 4.500h7M11.500 7.500v7M8 11h7" stroke="#00a0a0" /></svg></button>
            <button aria-label="全部折叠"><svg viewBox="0 0 16 16"><path d="M0 4.500h9M7 11h9" stroke="#000" stroke-width="3" /><path d="M1 4.500h7M8 11h7" stroke="#00a0a0" /></svg></button>
          </div>
          <div class="treeview">
            <ul class="tree">
              <li v-for="g in moduleTree" :key="g.label">
                <div class="node top">
                  <svg class="chev"><use :href="g.kids ? '#chevd' : '#chevr'" /></svg>
                  <svg class="i16"><use :href="g.kids ? '#folderopen' : '#folder'" /></svg>
                  <span>{{ g.label }}</span>
                </div>
                <ul v-if="g.kids" class="kids">
                  <li v-for="k in g.kids" :key="k[1]">
                    <button class="node leaf" :class="{ on: activeModule === k[1] }" @click="activeModule = k[1]"><svg class="i16"><use :href="'#' + k[0]" /></svg><span>{{ k[1] }}</span></button>
                  </li>
                </ul>
              </li>
            </ul>
            <div class="scroll left"><svg><use href="#chevu" /></svg><i></i><svg><use href="#chevd" /></svg></div>
          </div>
        </div>
        <button class="bar">单构件输入</button>
        <button class="bar">报表预览</button>
      </aside>

      <div class="right">
        <div class="toolbar comp">
          <button class="tb"><svg class="i16"><use href="#create" /></svg>新建<svg class="arr"><use href="#arr" /></svg></button>
          <button class="tb"><svg class="i16"><use href="#del" /></svg>删除</button>
          <button class="tb"><svg class="i16"><use href="#copy" /></svg>复制</button>
          <button class="tb"><svg class="i16"><use href="#rename" /></svg>重命名</button>
          <span class="sep"></span>
          <label for="floor">楼层</label>
          <span class="pick"><select id="floor"><option>基础层</option></select><svg class="arr"><use href="#arr" /></svg></span>
          <span class="sep"></span>
          <button class="tb"><svg class="i16"><use href="#sort" /></svg>排序<svg class="arr"><use href="#arr" /></svg></button>
          <button class="tb"><svg class="i16"><use href="#funnel" /></svg>过滤<svg class="arr"><use href="#arr" /></svg></button>
          <span class="sep"></span>
          <button class="tb"><svg class="i16"><use href="#fromfl" /></svg>从其他楼层复制构件</button>
          <button class="tb"><svg class="i16"><use href="#tofl" /></svg>复制构件到其他楼层</button>
          <span class="sep"></span>
          <button class="tb">查找<svg class="arr"><use href="#arr" /></svg></button>
          <span class="sep"></span>
          <button class="tb"><svg class="i16"><use href="#up" /></svg>上移</button>
          <button class="tb"><svg class="i16"><use href="#down" /></svg>下移</button>
        </div>

        <div class="panes">
          <section class="complist">
            <form class="find" @submit.prevent>
              <input v-model="keyword" type="text" placeholder="搜索构件..." aria-label="搜索构件">
              <button aria-label="搜索"><svg class="i16"><use href="#search" /></svg></button>
            </form>
            <div class="ctree">
              <div class="node croot"><svg class="chev"><use href="#chevd" /></svg><svg class="i16"><use href="#pillar" /></svg><span>框柱</span></div>
              <ul class="ckids">
                <li v-for="c in components" :key="c"><button class="node cleaf" :class="{ on: activeComponent === c }" @click="activeComponent = c"><svg class="gear"><use href="#gear" /></svg><span>{{ c }}</span></button></li>
              </ul>
            </div>
          </section>

          <section class="props">
            <div class="tabs"><button class="tab">属性编辑</button></div>
            <div class="sheet">
              <div class="tablewrap">
                <table>
                  <thead><tr><th class="cn"></th><th class="cname">属性名称</th><th class="cval">属性值</th><th class="cbox">附加</th></tr></thead>
                  <tbody>
                    <tr v-for="r in rows" :key="r.n">
                      <th scope="row">{{ r.n }}</th>
                      <td class="name" :class="[r.tone, { child: r.child, last: r.last, opened: r.group === '-' }]"><button v-if="r.group" class="pm" :aria-label="r.name"><svg viewBox="0 0 11 11"><path :d="r.group === '+' ? 'M2 5.500h7M5.500 2v7' : 'M2 5.500h7'" stroke="#000" /></svg></button><span>{{ r.name }}</span></td>
                      <td class="val"><template v-if="r.bar">{{ r.bar[0] }}<svg class="rb"><use :href="'#' + r.bar[1]" /></svg>{{ r.bar[2] }}</template><template v-else>{{ r.value }}</template></td>
                      <td class="ck"><input v-if="r.box" type="checkbox" :aria-label="r.name"></td>
                    </tr>
                  </tbody>
                </table>
                <svg class="mark" viewBox="0 0 368 64" aria-hidden="true"><ellipse cx="184" cy="32" rx="182" ry="30" fill="none" stroke="#f00" stroke-width="3" /></svg>
              </div>
              <div class="mdi">
                <div class="win back"><h3>箍筋图</h3></div>
                <div class="win front">
                  <h3>参数图</h3>
                  <div class="canvas">
                    <svg viewBox="0 0 423 504" preserveAspectRatio="xMidYMin meet" role="img" aria-label="截面参数图">
                      <g fill="none" stroke="#fff">
                        <rect x="46.500" y="84.500" width="302" height="298" />
                        <path d="M203.500 63v375M22 247.500h379" stroke-dasharray="9 3 3 3 3 3" />
                        <path d="M364 84.500h28M364 382.500h28M379.500 85v59M379.500 187v106M379.500 336v46M365 247.500h28M46.500 402v25M348.500 401v26M47 414.500h60M151 414.500h107M302 414.500h46" />
                      </g>
                      <path fill="#fff" d="M379.500 84l5 15h-10zM379.500 247l5-15h-10zM379.500 248l5 15h-10zM379.500 382l5-15h-10zM46 414.500l15-5v10zM203 414.500l-15-5v10zM204 414.500l15-5v10zM348 414.500l-15-5v10z" />
                      <g fill="none" stroke="#0ff" stroke-width="2"><rect x="53" y="91" width="287" height="284" /><path d="M323 102l14-11M328 107l12-9" /></g>
                      <circle v-for="(p, k) in rebars" :key="k" :cx="p[0]" :cy="p[1]" r="3" fill="#0ff" />
                      <g class="dim"><text x="129" y="424">150</text><text x="280" y="424">150</text><text transform="translate(389 165) rotate(-90)">200</text><text transform="translate(389 314) rotate(-90)">200</text></g>
                    </svg>
                  </div>
                </div>
              </div>
              <div class="scroll rightbar"><svg><use href="#chevu" /></svg><i></i><svg><use href="#chevd" /></svg></div>
            </div>
          </section>
        </div>
      </div>
    </main>

    <footer class="status">
      <span class="s1"></span><span class="s2">层高:3.55m</span><span class="s3">底标高:-3.58m</span><span class="s4">0</span><span class="s5">名称在当前层当前构件类型下不允许重名</span><span class="s6">1072.5 FPS</span>
    </footer>

    <div class="taskbar">
      <button class="start" aria-label="开始"><svg class="i16"><use href="#winlogo" /></svg></button>
      <div class="cortana">
        <svg class="circle" viewBox="0 0 22 22"><circle cx="11" cy="11" r="9" fill="none" stroke="#fff" stroke-width="2.500" /></svg>
        <input type="text" placeholder="在这里输入你要搜索的内容" aria-label="搜索">
        <svg class="mic" viewBox="0 0 12 16"><path d="M3.500.5h5v9h-5zM.5 7v4.500h11V7M6 12v3.500M3 15.500h6" fill="none" stroke="#aaa" /></svg>
      </div>
      <button v-for="p in pinned" :key="p.label" class="pin" :class="{ run: p.run, on: p.on, many: p.many }" :aria-label="p.label"><svg><use :href="'#' + p.icon" /></svg></button>
      <div class="tray">
        <div class="two cpu"><span>38%</span><span>CPU使用</span></div>
        <svg viewBox="0 0 16 16"><path d="M2 11l6-6 6 6" fill="none" stroke="#fff" stroke-width="1.200" /></svg>
        <svg viewBox="0 0 16 16"><path d="M.5 4.500h13v8H.5zM14 7h1.500v3H14z" fill="none" stroke="#fff" /><path d="M2 6h7v5H2z" fill="#fff" /></svg>
        <svg viewBox="0 0 16 16"><path d="M2 14Q3 4 14 2M5 14q0-7 9-9M8 14q0-4 6-6M11 14q0-2 3-3" fill="none" stroke="#ccc" stroke-width="1.200" /><circle cx="13" cy="13.500" r="1.500" fill="#fff" /></svg>
        <svg viewBox="0 0 16 16"><path d="M.5 6h2.500l4-4v12l-4-4H.5zM9 6q1.500 2 0 4M11 4q3 4 0 8M13 2.500q4.500 5.500 0 11" fill="none" stroke="#fff" /></svg>
        <span class="ime">中</span>
        <svg><use href="#sogou" /></svg>
        <div class="two clock"><span>12:29</span><span>2017/8/6</span></div>
        <button class="note" aria-label="通知"><svg viewBox="0 0 16 16"><path d="M.5 1.500h15v11H10L8 15l-2-2.500H.5z" fill="none" stroke="#fff" /></svg></button>
      </div>
    </div>

    <div class="ball">67</div>
    <div class="imebar">
      <svg class="slogo"><use href="#sogou" /></svg>
      <b>中</b>
      <svg viewBox="0 0 16 16"><circle cx="4.500" cy="5" r="2" fill="none" stroke="#1a74cc" stroke-width="1.500" /><path d="M11 8h3.500q.5 4-3 6l-.7-1q1.700-1 1.700-2H11z" fill="#1a74cc" /></svg>
      <svg viewBox="0 0 16 16"><rect x="5" y="0" width="6" height="10" rx="3" fill="#1a74cc" /><path d="M2.500 6q0 6 5.500 6t5.500-6M8 12v3M4.500 15h7" fill="none" stroke="#1a74cc" stroke-width="1.600" /></svg>
      <svg viewBox="0 0 16 16"><rect x="0" y="2" width="16" height="12" rx="1" fill="#1a74cc" /><path d="M2 5h12M2 8h12" stroke="#fff" stroke-width="1.600" stroke-dasharray="1.600 1" /><path d="M4 11.500h8" stroke="#fff" stroke-width="1.500" /></svg>
      <svg viewBox="0 0 16 16"><circle cx="7" cy="4" r="3.300" fill="#b3bdd3" /><path d="M0 14q0-6 7-6t6 6z" fill="#b3bdd3" /><rect x="8" y="9" width="8" height="6" fill="#e4e8f2" stroke="#9fabc6" /></svg>
      <svg viewBox="0 0 16 16"><path d="M5 1q3 3 6 0l5 3-2 4-2-1v8H4V7L2 8 0 4z" fill="#1a74cc" /></svg>
      <svg viewBox="0 0 16 16"><path d="M14.800 3.500l-2.800 2.500-2-.3-.3-2L12.200 1Q8.500 0 7 3q-.7 1.500 0 3L1 12q-1 1.500.3 2.700T4 15l6-6q4.500 1 5.500-2.500.2-1.500-.7-3z" fill="#1a74cc" /></svg>
    </div>
  </div>
</template>

<style>
html, body { margin: 0; background: #f0f0f0; }
</style>

<style scoped>
.desktop { --ui: "Open Sans", "Noto Sans CJK SC", sans-serif; --song: "Noto Sans CJK SC", sans-serif; position: relative; display: flex; flex-direction: column; height: 100vh; overflow: hidden; background: #f0f0f0; color: #000; font: 12px/16px var(--ui); }
.desktop * { box-sizing: border-box; }
.defs { position: absolute; }
button { display: flex; align-items: center; margin: 0; padding: 0; border: 0; background: none; color: inherit; font: inherit; white-space: nowrap; }
h1, h2, h3 { margin: 0; font: inherit; white-space: nowrap; }
ul { margin: 0; padding: 0; list-style: none; }
svg { flex: none; }
.i16 { width: 16px; height: 16px; }
.arr { width: 5px; height: 3px; }
.arr.wide { margin-left: 3px; }

.titlebar { display: flex; align-items: center; flex: none; height: 23px; padding-left: 2px; gap: 5px; background: #fff; }
.titlebar h1 { font: 13px/18px Roboto, "Noto Sans CJK SC", sans-serif; }
.winbtns { display: flex; margin-left: auto; align-self: flex-start; }
.winbtns button { width: 46px; height: 20px; justify-content: center; }
.winbtns svg { width: 12px; height: 12px; }

.menubar { display: flex; align-items: center; flex: none; height: 30px; padding-left: 8px; gap: 11px; margin-bottom: 1px; }
.menubar .ico { gap: 4px; }
.menubar .change { margin-left: 6px; }
.menubar .bell { margin-left: 3px; }
.ad { margin-left: -10px; width: 188px; padding-left: 29px; height: 29px; line-height: 29px; background: #f6f6f6; color: #0d6666; text-decoration: none; white-space: nowrap; overflow: hidden; }
.acct { margin-left: -6px; }
.more { align-self: flex-start; width: 8px; margin: 4px 8px 0 auto; }
.more svg { width: 8px; height: 8px; }

.toolrow { display: flex; flex: none; height: 30px; gap: 3px; }
.toolbar { display: flex; align-items: center; height: 28px; border-radius: 3px; background: linear-gradient(#fbfbfb, #ececec); }
.tb { gap: 4px; padding: 0 3px 0 4px; height: 22px; }
.off { color: #868686; }
.sep { width: 1px; height: 17px; margin: 0 2px 0 3px; background: #b5b5b5; }
.sep.dark { height: 24px; background: #8a8a8a; }
.files { flex: 0 0 150px; }
.files .more, .draw .more { margin-right: 4px; }
.draw { flex: 0 0 544px; }
.view { flex: 1; padding-left: 5px; }
.dim2 { gap: 2px; padding: 0 4px 0 1px; border: 1px solid #666; }
.dim2 .arr { margin-left: 6px; }

.work { display: flex; flex: 1; min-height: 0; gap: 6px; padding: 0 3px 2px 0; }
.modules { display: flex; flex-direction: column; flex: 0 0 229px; font-family: var(--song); }
.caption { display: flex; align-items: center; flex: none; height: 16px; margin-bottom: 1px; padding-right: 3px; gap: 8px; background: #0054e3; color: #fff; }
.caption h2 { margin-right: auto; font-size: 13px; }
.caption svg { width: 10px; height: 10px; }
.bar { flex: none; justify-content: center; height: 22px; border: 1px solid #a0a0a0; border-top-color: #c4c4c4; background: #f0f0f0; }
.treebox { display: flex; flex-direction: column; flex: 1; min-height: 0; padding: 1px; border: 1px solid #a0a0a0; }
.treetools { display: flex; align-items: center; flex: none; height: 25px; padding-left: 5px; gap: 7px; background: linear-gradient(#fdfdfd, #ececec); }
.treetools svg { width: 16px; height: 16px; }
.treeview { display: flex; flex: 1; min-height: 0; padding: 1px; border: 1px solid #828790; background: #fff; overflow: hidden; }
.tree { flex: 1; min-width: 0; overflow: hidden; font-feature-settings: "hwid"; }
.node { display: flex; align-items: center; height: 16px; }
.chev { width: 10px; height: 10px; }
.top { padding-left: 5px; gap: 5px; }
.top .chev { margin-right: 2px; }
.kids { position: relative; padding-left: 40px; }
.kids::before { content: ""; position: absolute; left: 30px; top: 0; bottom: 8px; border-left: 1px dotted #808080; }
.kids::after { content: ""; position: absolute; left: 11px; top: 0; bottom: 0; border-left: 1px dotted #808080; }
.kids li, .ckids li { position: relative; }
.kids li::before { content: ""; position: absolute; left: -9px; top: 7px; width: 9px; border-top: 1px dotted #808080; }
.leaf { padding: 0 4px 0 1px; gap: 5px; }
.leaf.on { background: #d9d9d9; }
.scroll { display: flex; flex-direction: column; align-items: center; flex: 0 0 15px; padding: 5px 0; background: #f0f0f0; }
.scroll svg { width: 9px; height: 9px; }
.scroll i { width: 100%; background: #cdcdcd; }
.left i { flex: 68; margin: 80px 0 44px; }

.right { display: flex; flex-direction: column; flex: 1; min-width: 0; }
.comp { flex: none; }
.comp label { margin-left: -1px; margin-right: 6px; }
.pick { position: relative; display: flex; align-items: center; width: 61px; margin-right: 2px; background: #f7f7f7; }
.pick select { width: 51px; height: 22px; padding: 0 0 0 2px; border: 0; border-radius: 0; appearance: none; background: #fff; font: inherit; color: #000; }
.pick .arr { position: absolute; right: 4px; }
.panes { display: flex; flex: 1; min-height: 0; gap: 4px; }
.complist { display: flex; flex-direction: column; flex: 0 0 183px; margin-top: 4px; border-right: 2px solid #8f9299; font-family: var(--song); }
.find { display: flex; flex: none; height: 25px; }
.find input { flex: 1; min-width: 0; margin: 1px 0 0 1px; height: 24px; padding: 0 2px 3px; border: 1px solid #7a7a7a; border-radius: 0; background: #fff; font: inherit; outline: 0; }
.find input::placeholder { color: #777; }
.find button { width: 24px; justify-content: center; background: #fff; }
.ctree { flex: 1; min-height: 0; padding-top: 1px; overflow: hidden; border: solid #828790; border-width: 2px 0 2px 1px; background: #fff; font-feature-settings: "hwid"; }
.croot { padding-left: 7px; gap: 5px; }
.croot .chev { margin-right: 1px; }
.ckids { position: relative; padding-left: 40px; }
.ckids::before { content: ""; position: absolute; left: 31px; top: 0; bottom: 8px; border-left: 1px dotted #808080; }
.ckids li::before { content: ""; position: absolute; left: -8px; top: 7px; width: 10px; border-top: 1px dotted #808080; }
.cleaf { padding: 0 3px 0 4px; gap: 8px; }
.cleaf.on { background: #316ac5; }
.gear { width: 11px; height: 11px; }

.props { display: flex; flex-direction: column; flex: 1; min-width: 0; padding: 0 2px 2px 3px; border: 1px solid #d5d5d5; background: #fff; font-family: var(--song); }
.tabs { flex: none; height: 20px; margin: 0 -2px 3px -3px; border-bottom: 1px solid #d5d5d5; }
.tab { height: 20px; padding: 0 7px 0 6px; border-right: 1px solid #d5d5d5; background: #fff; }
.sheet { display: flex; flex: 1; min-height: 0; border: 1px solid #a0a0a0; }
.tablewrap { position: relative; flex: 0 0 auto; padding: 1px 0 0 1px; }
table { border-collapse: separate; border-spacing: 0; table-layout: fixed; width: 369px; line-height: 16px; font-feature-settings: "hwid"; }
th, td { height: 19px; padding: 0; border: solid #c0c0c0; border-width: 0 1px 1px 0; font-weight: 400; white-space: nowrap; }
thead th { height: 23px; background: linear-gradient(#fdfdfd, #ececec); }
.cn { width: 21px; }
.cname { width: 191px; }
thead .cval { width: 126px; background: linear-gradient(#f9d99c, #f1c065); color: #600060; }
.cbox { width: 31px; }
tbody th { background: linear-gradient(90deg, #fdfdfd, #ececec); text-align: center; }
.name { position: relative; padding-left: 20px; }
.name.child { padding-left: 29px; }
.blue { color: #00f; }
.gray { color: #808080; }
.pm { position: absolute; left: 2px; top: 3px; width: 13px; height: 13px; border: 1px solid #b0b0b0; background: #fff; }
.pm svg { width: 11px; height: 11px; }
.opened::after { content: ""; position: absolute; left: 8px; top: 16px; bottom: -1px; border-left: 1px solid #c0c0c0; }
.child::before { content: ""; position: absolute; left: 8px; top: 0; bottom: -1px; border-left: 1px solid #c0c0c0; }
.last::before { bottom: 9px; }
.child::after { content: ""; position: absolute; left: 9px; top: 9px; width: 16px; border-top: 1px solid #c0c0c0; }
.val { padding-left: 2px; }
.rb { width: 12px; height: 12px; margin: 0 1px; vertical-align: -2px; }
.ck { text-align: center; line-height: 0; }
.ck input { appearance: none; width: 13px; height: 13px; margin: 1px 0 0; border: 1px solid #333; background: #fff; }
.ck input:checked { background: #333; }
.mark { position: absolute; left: 4px; bottom: 10px; width: 368px; height: 64px; pointer-events: none; }
.mdi { position: relative; flex: 1; min-width: 0; overflow: hidden; }
.win { position: absolute; border: 1px solid #4a4a4a; background: linear-gradient(#bccbda, #d7e4f2 28px); box-shadow: inset 1px 1px #eef4fa; color: #9a9a9a; font-family: var(--ui); }
.back { right: 0; top: 0; width: 269px; height: 80px; }
.back h3 { padding: 10px 7px; }
.front { right: 0; top: 20px; bottom: 0; width: 440px; display: flex; flex-direction: column; padding: 0 7px 7px 7px; }
.front h3 { flex: none; height: 30px; padding-top: 10px; }
.canvas { flex: 1; min-height: 0; border: 1px solid; border-color: #fff #a0a0a0 #a0a0a0 #fff; background: #000; }
.canvas svg { display: block; width: 100%; height: 100%; }
.dim { fill: #fff; font: 26px "Liberation Serif", serif; text-anchor: middle; }
.rightbar i { flex: 1; margin: 218px 0 10px; }

.status { display: flex; flex: none; height: 21px; gap: 2px; padding-bottom: 1px; font-family: var(--song); font-feature-settings: "hwid"; }
.status span { padding: 1px 1px 0; border: 1px solid #d4d4d4; background: linear-gradient(#fdfdfd, #f0f0f0); white-space: nowrap; }
.s1 { flex: 0 0 148px; }
.s2 { flex: 0 0 78px; }
.s3 { flex: 0 0 98px; }
.s4 { flex: 0 0 48px; }
.s5 { flex: 1; }
.s6 { flex: 0 0 70px; }

.taskbar { display: flex; flex: none; height: 40px; background: #000c10; color: #fff; }
.start { width: 48px; justify-content: center; background: #000; }
.cortana { display: flex; align-items: center; flex: 0 0 344px; margin-right: 2px; padding: 0 15px 0 9px; gap: 5px; background: #333; }
.cortana .circle { width: 22px; height: 22px; }
.cortana .mic { width: 12px; height: 18px; }
.cortana input { flex: 1; min-width: 0; padding: 0; border: 0; background: none; color: #fff; font: 14px/20px var(--song); outline: 0; }
.cortana input::placeholder { color: #9a9a9a; }
.pin { position: relative; width: 48px; margin-right: 2px; justify-content: center; }
.pin svg { width: 24px; height: 24px; }
.pin.run::after { content: ""; position: absolute; left: 4px; right: 4px; bottom: 0; height: 2px; background: #76b9ed; }
.pin.many::after { background: linear-gradient(90deg, #76b9ed 33px, #4c7fa8 33px); }
.pin.on { background: #343d42; }
.pin.on::after { left: 0; right: 0; }
.tray { display: flex; align-items: center; margin-left: auto; gap: 8px; }
.tray > svg { width: 16px; height: 16px; }
.two { display: flex; flex-direction: column; align-items: center; line-height: 18px; }
.cpu { width: 52px; margin-right: 8px; }
.clock { width: 60px; margin: 0 3px 0 8px; }
.ime { width: 16px; margin: 0 4px 0 1px; font-size: 14px; }
.note { height: 40px; padding-left: 8px; padding-right: 20px; margin-right: 4px; border-right: 1px solid #555; }
.note svg { width: 16px; height: 16px; }

.ball { position: absolute; left: 942px; top: -28px; width: 46px; height: 46px; padding-top: 27px; border: 2px solid #f0f0f0; border-radius: 50%; background: #2fbf4f; box-shadow: 0 0 2px 1px #888, inset 0 0 0 1px #1f8f3a; color: #fff; font: bold 11px/13px "DejaVu Sans", sans-serif; text-align: center; }
.imebar { position: absolute; right: 166px; top: 9px; display: flex; align-items: center; height: 24px; padding: 0 4px 0 28px; gap: 6px; border: 1px solid #8fb0d8; background: #fff; }
.imebar svg { width: 16px; height: 16px; }
.imebar b { width: 16px; color: #1a74cc; font: bold 15px/16px var(--song); }
.imebar .slogo { position: absolute; left: -6px; top: -4px; width: 28px; height: 28px; }
</style>
